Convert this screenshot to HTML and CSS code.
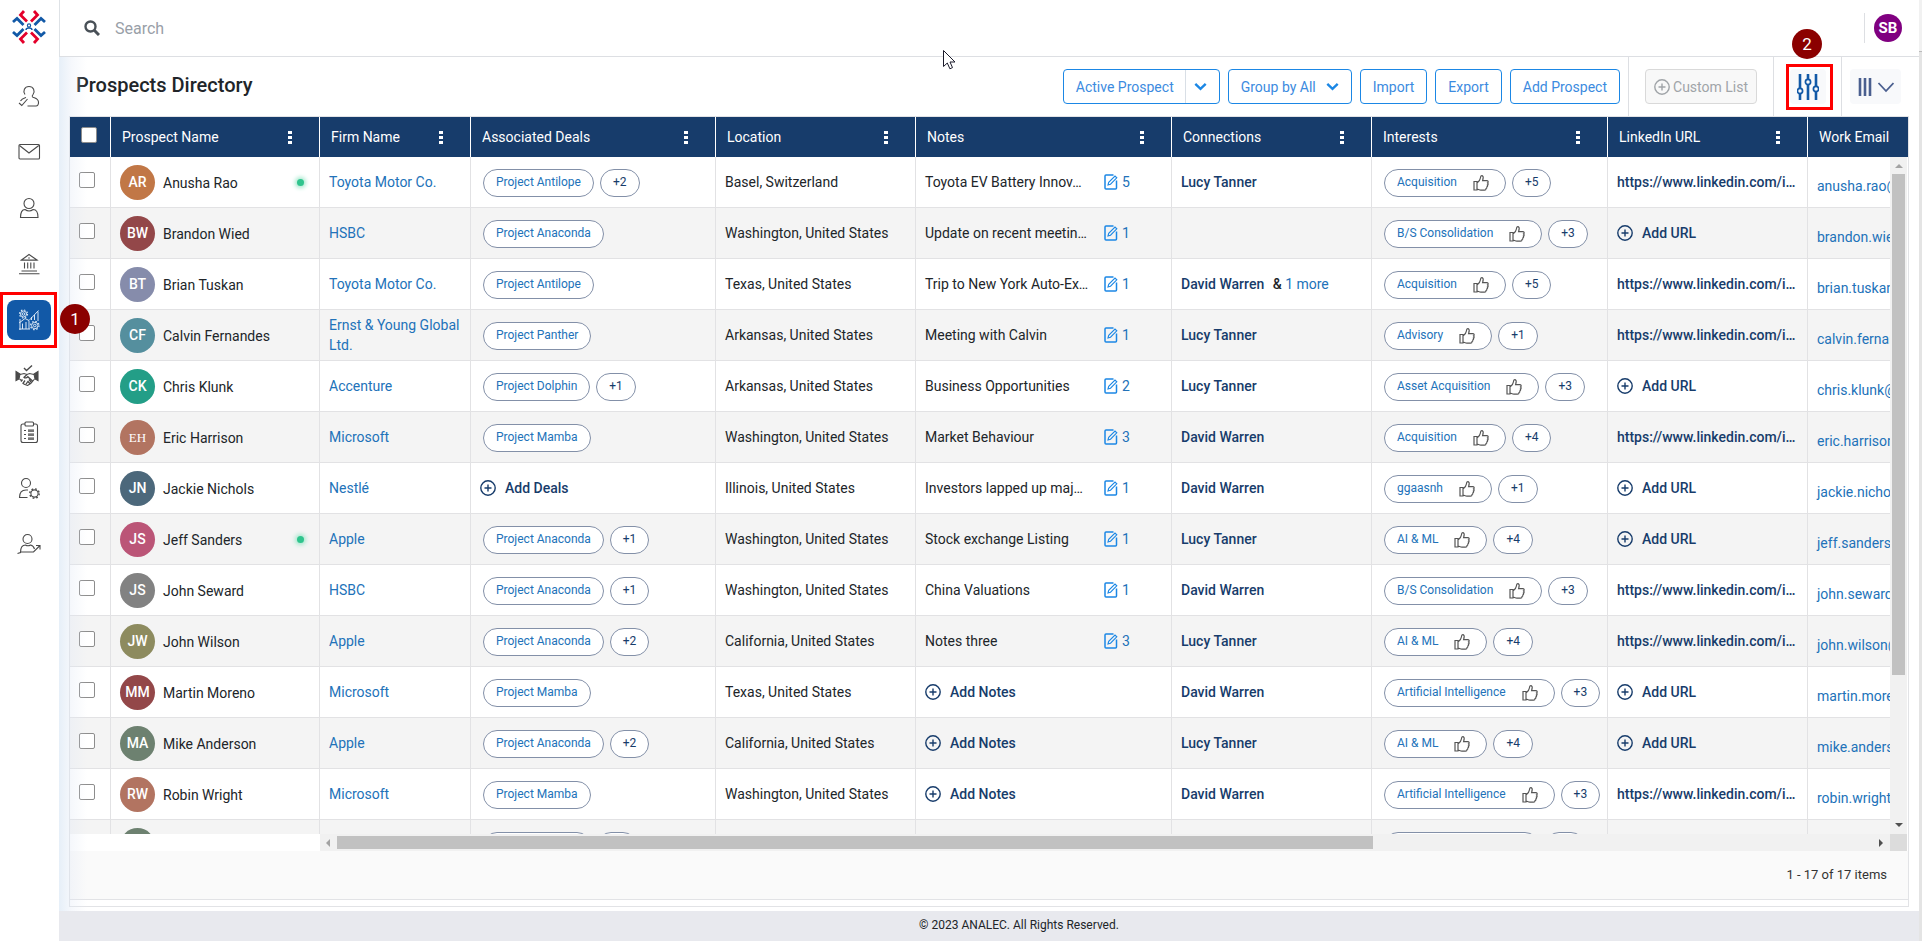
FILE: index.html
```html
<!DOCTYPE html>
<html lang="en">
<head>
<meta charset="utf-8">
<title>Prospects Directory</title>
<link rel="stylesheet" href="styles.css">
</head>
<body>
<svg class="sprite" aria-hidden="true">
  <symbol id="i-dots" viewBox="0 0 4 14"><path d="M0 1h4v3H0zM0 6h4v3H0zM0 11h4v3H0z" fill="currentColor"/></symbol>
  <symbol id="i-add" viewBox="0 0 16 16"><circle cx="8" cy="8" r="7.2"/><path d="M8 4.500v7M4.500 8h7"/></symbol>
  <symbol id="i-note" viewBox="0 0 14 16"><path d="M9.500 1H2Q1 1 1 2v12Q1 15 2 15h9.500Q12.500 15 12.500 14V6.500"/><path d="M4 11l.7-2.600L11 2l1.800 1.800-6.300 6.400z" stroke-width="1.100"/></symbol>
  <symbol id="i-thumb" viewBox="0 0 16 16"><path d="M1 6.500h3V15H1zM4 8C6 6.500 7.200 5 7.400 3 7.500 1.500 7.900.7 8.700.7c1.300 0 1.700 1.300 1.400 2.800L9.600 5.700H14c1.400.2 1.500 1.600.6 2.200.8.600.6 1.800-.2 2.200.4.700.2 1.500-.6 1.900.2.800-.1 1.500-.8 1.700 0 .8-.5 1.500-1.500 1.500H8c-1.600 0-2.500-.8-4-1.200z"/></symbol>
  <symbol id="i-chev" viewBox="0 0 12 8"><path d="M1.200 1.500L6 6.200l4.800-4.700" stroke-width="2.200"/></symbol>
</svg>

<div class="app">
  <nav class="sidebar" aria-label="Main">
    <a class="logo" href="#" aria-label="Home">
      <svg viewBox="0 0 34 34" width="34" height="34" fill="none" stroke-width="2.800">
        <g stroke="#e4002b"><path d="M15 11.500L8.500 5l3.500-4M19 11.500L25.500 5 22 1M15 22.500L8.500 29l3.500 4M19 22.500l6.500 6.500-3.500 4"/></g>
        <g stroke="#1259a7"><path d="M11.500 15L5 8.500 1 12M22.500 15L29 8.500l4 3.500M11.500 19L5 25.500 1 22M22.500 19l6.500 6.500 4-3.500"/><circle cx="17" cy="15.500" r="1.600" stroke-width="1.200"/><path d="M14 20q0-2 3-2t3 2" stroke-width="1.400"/></g>
      </svg>
    </a>
    <ul class="nav">
      <li><a href="#" aria-label="Client access"><svg viewBox="0 0 22 22"><path d="M7 9.500C4.500 6 6.500 1.500 11 1.500s6.500 4.500 4 8c-.8 1-1 1.500-.6 2.200 1 1.500 5.600 1 6.100 5.300.2 2.500-1 4-2.500 4H9.500M8 12.500c-2 .7-4.500 1.500-5.500 3.500M1 18l2.800 2.500L9.500 14"/></svg></a></li>
      <li><a href="#" aria-label="Mail"><svg viewBox="0 0 22 22"><rect x="1" y="3.500" width="20.500" height="14.500" rx="1"/><path d="M1.500 4.500L11 12l9.800-7.500"/></svg></a></li>
      <li><a href="#" aria-label="Contacts"><svg viewBox="0 0 22 22"><circle cx="11" cy="6.500" r="5"/><path d="M7 12.500c-3 0-4.500 3-4.500 8h17.500c0-5-1.500-8-4.800-8Q11 15.500 7 12.500z"/></svg></a></li>
      <li><a href="#" aria-label="Firms"><svg viewBox="0 0 22 22"><path d="M3.500 7L11 1.500 19 7zM2.500 7.200h17M6.500 9.500v6M9.700 9.500v6M12.800 9.500v6M16 9.500v6M3.500 18h15.500M1 20.700h20.500M10.200 5h1.600"/></svg></a></li>
      <li class="current"><a href="#" aria-label="Prospects" aria-current="page"><svg viewBox="0 0 22 22"><path d="M2 10v11M1 20h11M4.500 20v-5.500M8 20v-7M11 20v-8M13.500 11V8M16.500 11V6M20 12V2.500M1 14l6-4.500 4 2L20.500 1.500"/><circle cx="5.500" cy="5" r="1.300"/><circle cx="5.500" cy="5" r="3"/><circle cx="5.500" cy="5" r="4" stroke-width="1.200" stroke-dasharray="1.500 1.640"/><circle cx="16.800" cy="16.500" r="1.300"/><circle cx="16.800" cy="16.500" r="3.200"/><circle cx="16.800" cy="16.500" r="4.200" stroke-width="1.200" stroke-dasharray="1.600 1.700"/></svg></a>
        <span class="frame frame-nav"></span><span class="step step-nav">1</span></li>
      <li><a href="#" aria-label="Deals"><svg class="wide" viewBox="2 0 24 22"><path d="M9 3l2.500 2.500L17 .5" stroke-width="1.400"/><path d="M1 6.500l4 2.500-1 5-3 1.500zM23 6.500L19 9l1 5 3 1.500z" fill="#4a4a4a"/><path d="M5 9.500l4-1 3 1 2.500-1 4.500 1M4.500 14l2 1.500M19.500 14l-2 2.500c-1 2-3 3-5 4-1.500-.5-3.500-1-5-2.500"/><path d="M12 9.500l-3 2.800c.8 1 2.500.7 3.800-.6l5 4.500M7.500 14.500L6 16.500M10 15.500l-1.800 2.500M12.500 17l-1.500 2.200M14 14.500l2.500 3M12.500 16l2.500 2.800" stroke-width="1.300"/></svg></a></li>
      <li><a href="#" aria-label="Tasks"><svg viewBox="0 0 22 22"><rect x="3" y="3" width="16.500" height="18.500" rx="2"/><rect x="7" y="1" width="8.500" height="4" rx="1" fill="#fff"/><path d="M6 9.500h2M10 9h6M10 10.200h6M6 13.500h2M10 13h6M10 14.200h6M6 17.500h2M10 17h6M10 18.200h6"/></svg></a></li>
      <li><a href="#" aria-label="User settings"><svg class="wide" viewBox="0 0 24 22"><circle cx="9" cy="6" r="4.500"/><path d="M10.500 20.500H2.500c0-5 2-7.500 6.500-7.500h2"/><circle cx="17.500" cy="16.500" r="3.600"/><circle cx="17.500" cy="16.500" r="4.700" stroke-width="1.400" stroke-dasharray="1.800 1.890"/></svg></a></li>
      <li><a href="#" aria-label="User activity"><svg class="wide" viewBox="0 0 24 22"><circle cx="10.500" cy="6" r="4.500"/><path d="M.5 20.500l3-1C3.500 14.500 5.500 12 8.500 12q2.500 1.500 5 0c2 .5 3.500 2.200 4 4M3.500 19h13l6.500-6.500M19 12.500h4v4"/></svg></a></li>
    </ul>
  </nav>

  <div class="page">
    <header class="topbar">
      <label class="search"><svg viewBox="0 0 16 16" width="16" height="16"><circle cx="6.500" cy="6.500" r="5" fill="none" stroke="#495057" stroke-width="2.400"/><path d="M10.500 10.500l4.500 4.500" stroke="#495057" stroke-width="3"/></svg>
        <input type="search" placeholder="Search" aria-label="Search"></label>
      <svg class="pointer" viewBox="0 0 13 20" width="13" height="20"><path d="M.5.500v16l3.800-3.500 2.600 5.800 2.600-1.200L7 12h5z" fill="#fff" stroke="#1b1b2b"/></svg>
      <div class="account"><button class="me" type="button">SB</button></div>
    </header>

    <main class="content">
      <div class="toolbar">
        <h1>Prospects Directory</h1>
        <div class="actions">
          <div class="split"><button type="button">Active Prospect</button><button type="button" class="caret" aria-label="Prospect status"><svg class="chev"><use href="#i-chev"/></svg></button></div>
          <button type="button" class="btn">Group by All <svg class="chev"><use href="#i-chev"/></svg></button>
          <button type="button" class="btn">Import</button>
          <button type="button" class="btn">Export</button>
          <button type="button" class="btn">Add Prospect</button>
        </div>
        <div class="zone"><button type="button" class="btn custom" disabled><svg class="add"><use href="#i-add"/></svg>Custom List</button></div>
        <div class="zone zone-filter"><button type="button" class="soft filter" aria-label="Filters"><svg viewBox="0 0 22 26" width="22" height="26" fill="none" stroke="#1259a7"><path d="M3 0v14M3 20v6M11 0v5.500M11 11v15M19 0v12M19 18v8" stroke-width="2.600"/><g stroke-width="1.700"><circle cx="3" cy="17" r="2.600"/><circle cx="11" cy="8" r="2.600"/><circle cx="19" cy="15" r="2.600"/></g></svg></button>
          <span class="frame frame-filter"></span><span class="step step-filter">2</span></div>
        <div class="zone zone-cols"><button type="button" class="soft cols" aria-label="Columns"><svg viewBox="0 0 36 18" width="36" height="18" fill="none" stroke="#4a5f8f"><path d="M2 0v18M7 0v18M12 0v18" stroke-width="2.600"/><path d="M20.500 5l7.500 8 7.500-8" stroke-width="1.800"/></svg></button></div>
      </div>

      <section class="card">
        <div class="grid">
          <div class="viewport">
            <table>
              <colgroup><col class="c-check"><col class="c-name"><col class="c-firm"><col class="c-deals"><col class="c-loc"><col class="c-notes"><col class="c-conn"><col class="c-int"><col class="c-url"><col class="c-mail"></colgroup>
              <thead><tr id="head"></tr></thead>
              <tbody id="rows"></tbody>
            </table>
          </div>
          <div class="gutter"><div class="gutter-head"></div><div class="vbar"><i class="up"></i><div class="vthumb"></div><i class="down"></i></div></div>
        </div>
        <div class="hbar"><div class="locked"></div><div class="htrack"><i class="left"></i><div class="hthumb"></div><i class="right"></i></div><div class="corner"></div></div>
        <div class="pager">1 - 17 of 17 items</div>
      </section>
    </main>
    <footer class="foot">© 2023 ANALEC. All Rights Reserved.</footer>
  </div>
  <div class="rail"></div>
</div>
<script src="rows.js"></script>
</body>
</html>
```

FILE: styles.css
```css
* { box-sizing: border-box; }
body { margin: 0; font: 14px/20px Roboto, "Liberation Sans", sans-serif; color: #212529; background: #fff; }
button { font: inherit; cursor: pointer; }
a { color: #2272b9; text-decoration: none; }
svg { display: block; flex: none; }
.sprite { position: absolute; width: 0; height: 0; }

.app { display: flex; height: 100vh; overflow: hidden; }
.sidebar { width: 59px; flex: none; background: #fff; padding-right: 1px; }
.logo { display: flex; justify-content: center; padding: 10px 0 24px; }
.nav { list-style: none; margin: 0; padding: 0; }
.nav li { position: relative; height: 56px; display: flex; align-items: center; justify-content: center; }
.nav svg { width: 22px; height: 22px; fill: none; stroke: #4a4a4a; stroke-width: 1.1; overflow: visible; }
.nav svg.wide { width: 24px; }
.nav a { display: flex; align-items: center; justify-content: center; width: 44px; height: 40px; border-radius: 8px; }
.nav .current a { background: #1259a7; }
.nav .current svg { stroke: #d8e6f5; stroke-width: 1; }

.frame { position: absolute; border: 3px solid #f00; pointer-events: none; }
.frame-nav { inset: 0 1px 0 0; }
.frame-filter { inset: 7px 8px 6px 12px; }
.step { position: absolute; z-index: 5; width: 30px; height: 30px; border-radius: 50%; background: #8b0000; color: #fff; font-size: 17px; line-height: 30px; text-align: center; }
.step-nav { left: 60px; top: 12px; }
.step-filter { left: 18px; top: -28px; }

.page { flex: 1; min-width: 0; display: flex; flex-direction: column; }
.topbar { position: relative; height: 57px; flex: none; display: flex; align-items: center; justify-content: space-between; padding: 0 17px 0 24px; border-left: 1px solid #dee2e6; border-bottom: 1px solid #dddfe3; background: #fff; }
.search { display: flex; align-items: center; gap: 12px; flex: 1; }
.search input { border: 0; outline: 0; width: 400px; font: 16px/24px Roboto, "Liberation Sans", sans-serif; padding: 1px 3px 0; }
.search input::placeholder { color: #99a0a8; opacity: 1; }
.pointer { position: absolute; left: 883px; top: 50px; z-index: 4; }
.account { border-left: 1px solid #dddfe3; padding: 1px 0 1px 9px; }
.me { width: 28px; height: 28px; border: 0; padding: 0; border-radius: 50%; background: #800080; color: #fff; font-weight: 700; font-size: 15px; }

.content { position: relative; flex: 1; min-height: 0; display: flex; flex-direction: column; padding: 0 10px 4px; }
.content::before { content: ""; position: absolute; inset: 0 auto 0 0; width: 28px; z-index: 2; pointer-events: none; background: linear-gradient(90deg, rgba(200,220,240,.45), rgba(225,232,245,.3) 45%, rgba(255,255,255,0)); }
.toolbar { flex: none; display: flex; align-items: stretch; height: 59px; }
h1 { margin: 0; padding: 16px 7px; flex: 1; font-size: 20px; line-height: 24px; font-weight: 500; white-space: nowrap; }
.actions { display: flex; gap: 8px; padding: 12px 8px 12px 0; }
.btn, .split { height: 35px; border: 1px solid #1b87e5; border-radius: 4px; background: #fff; color: #3c8be0; display: flex; align-items: center; white-space: nowrap; }
.btn { padding: 0 12px; gap: 10px; }
.split button { height: 33px; border: 0; background: none; color: inherit; padding: 0 11px 0 12px; }
.split .caret { border-left: 1px solid #d9dfe6; padding: 0 12px 0 8px; }
.chev { width: 13px; height: 9px; fill: none; stroke: #1b87e5; }
.zone { position: relative; border-left: 1px solid #dddfe3; padding: 12px 16px; }
.zone-filter { padding: 12px 15px 12px 16px; }
.zone-cols { padding: 12px 8px; }
.btn.custom { border-color: #d9d9d9; background: #f8f8f8; color: #a0a4a8; padding: 0 8px; gap: 3px; }
.add { width: 16px; height: 16px; fill: none; stroke: currentColor; stroke-width: 1.4; }
.soft { border: 0; border-radius: 4px; background: #f8f9fb; height: 35px; display: flex; align-items: center; justify-content: center; padding: 0; }
.filter { width: 36px; }
.cols { width: 51px; }

.card { flex: 1; min-height: 0; display: flex; flex-direction: column; border: 1px solid #e2e3e6; padding-bottom: 6px; }
.grid { flex: 1; min-height: 0; display: flex; overflow: hidden; }
.viewport { flex: 1; min-width: 0; overflow: hidden; }
.gutter { width: 18px; flex: none; display: flex; flex-direction: column; }
.gutter-head { position: relative; z-index: 3; height: 40px; flex: none; background: #173c6b; }
table { table-layout: fixed; width: 100%; min-width: 1938px; border-collapse: separate; border-spacing: 0; }
.c-check { width: 41px; } .c-name { width: 209px; } .c-firm { width: 151px; } .c-deals { width: 245px; } .c-loc { width: 200px; }
.c-notes { width: 256px; } .c-conn { width: 200px; } .c-int { width: 236px; } .c-url { width: 200px; } .c-mail { width: 200px; }
thead { position: relative; z-index: 3; }
th { height: 40px; padding: 0 11px; background: #173c6b; color: #fff; font-weight: 400; text-align: left; border-right: 1px solid #fff; }
th > div { display: flex; align-items: center; justify-content: space-between; padding-right: 16px; }
.more { border: 0; background: none; color: #fff; padding: 0; }
.more svg { width: 4px; height: 14px; }
th input, td input { display: block; appearance: none; width: 16px; height: 16px; margin: 0 0 4px; border: 1px solid #8d8d8d; border-radius: 2px; background: #fff; }
td { height: 51px; padding: 0 9px; border-right: 1px solid #e2e2e4; border-bottom: 1px solid #e2e2e4; white-space: nowrap; }
tr:nth-child(even) td { background: #f4f4f4; }
.person { display: flex; align-items: center; gap: 8px; padding-top: 1px; }
.person i { width: 35px; height: 35px; border-radius: 50%; color: #fff; font-style: normal; font-weight: 500; line-height: 35px; text-align: center; }
.person i.serif { font: 13px/35px "Liberation Serif", serif; }
.person b { font-weight: 400; flex: 1; }
.person u { width: 7px; height: 7px; margin-right: 6px; border-radius: 50%; background: #2fc48d; box-shadow: 0 0 4px 2px #a4e8cd; }
.firm { white-space: normal; line-height: 20px; }
.pills { display: flex; gap: 6px; padding: 1px 0 0 3px; }
.pill { height: 28px; border: 1px solid #8390a8; border-radius: 14px; padding: 0 12px 2px; background: #fff; color: #2272b9; font-size: 12px; display: flex; align-items: center; }
.pill.n { color: #173c6b; }
.pill svg { width: 16px; height: 16px; margin: 2px 4px 0 16px; fill: none; stroke: #555; stroke-width: 1.2; }
.addlink { border: 0; background: none; padding: 0; display: flex; align-items: center; gap: 9px; color: #173c6b; font-weight: 500; }
.note { display: flex; align-items: center; }
.note span { width: 165px; margin-right: 14px; }
.note a { display: flex; align-items: center; gap: 4px; }
.note svg { width: 14px; height: 16px; fill: none; stroke: #1b87e5; stroke-width: 1.5; }
.conn { color: #173c6b; font-weight: 500; }
.conn a { font-weight: 400; }
.conn em { font-style: normal; padding-left: 5px; color: #212529; }
.url { color: #173c6b; font-weight: 500; display: block; }
.mail { padding-top: 8px; }

.vbar { flex: 1; display: flex; flex-direction: column; align-items: center; width: 17px; background: #f1f1f1; }
.vbar i, .htrack i { width: 0; height: 0; border: 4px solid transparent; }
.vbar .up { border-bottom-color: #a3a3a3; margin: 3px 0 6px; }
.vbar .down { border-top-color: #505050; margin: auto 0 3px; }
.vthumb { width: 13px; height: 74%; background: #c1c1c1; }
.hbar { flex: none; display: flex; height: 17px; padding-right: 1px; }
.locked { width: 250px; }
.htrack { flex: 1; display: flex; align-items: center; background: #f1f1f1; }
.htrack .left { border-right-color: #a3a3a3; margin: 0 7px 0 2px; }
.htrack .right { border-left-color: #505050; margin: 0 3px 0 auto; }
.hthumb { width: 66%; height: 13px; background: #c1c1c1; }
.corner { width: 17px; background: #dcdcdc; }
.pager { flex: none; height: 49px; padding: 0 21px; font-size: 13px; line-height: 48px; text-align: right; background: #fafafa; border-bottom: 1px solid #e2e3e6; color: #333; }
.foot { flex: none; height: 30px; padding-left: 60px; line-height: 28px; text-align: center; font-size: 12px; background: #e8e9ee; }
.rail { width: 3px; flex: none; background: linear-gradient(#f1f1f1 51px, #bbb 51px, #bbb 52px, #e4e4e4 52px); }
```

FILE: rows.js
```js
const columns = ["Prospect Name", "Firm Name", "Associated Deals", "Location", "Notes", "Connections", "Interests", "LinkedIn URL", "Work Email"];

// name, initials, avatar colour, online, firm, deal, more deals, location, note, note count, connection, more connections, interest, more interests, has URL, email
const people = [
  ["Anusha Rao", "AR", "#c17746", 1, "Toyota Motor Co.", "Project Antilope", 2, "Basel, Switzerland", "Toyota EV Battery Innov…", 5, "Lucy Tanner", 0, "Acquisition", 5, 1, "anusha.rao@toyota.com"],
  ["Brandon Wied", "BW", "#934749", 0, "HSBC", "Project Anaconda", 0, "Washington, United States", "Update on recent meetin…", 1, "", 0, "B/S Consolidation", 3, 0, "brandon.wied@hsbc.com"],
  ["Brian Tuskan", "BT", "#868cab", 0, "Toyota Motor Co.", "Project Antilope", 0, "Texas, United States", "Trip to New York Auto-Ex…", 1, "David Warren", 1, "Acquisition", 5, 1, "brian.tuskan@toyota.com"],
  ["Calvin Fernandes", "CF", "#558f9e", 0, "Ernst & Young Global Ltd.", "Project Panther", 0, "Arkansas, United States", "Meeting with Calvin", 1, "Lucy Tanner", 0, "Advisory", 1, 1, "calvin.fernandes@ey.com"],
  ["Chris Klunk", "CK", "#239e87", 0, "Accenture", "Project Dolphin", 1, "Arkansas, United States", "Business Opportunities", 2, "Lucy Tanner", 0, "Asset Acquisition", 3, 0, "chris.klunk@accenture.com"],
  ["Eric Harrison", "EH", "#b27461", 0, "Microsoft", "Project Mamba", 0, "Washington, United States", "Market Behaviour", 3, "David Warren", 0, "Acquisition", 4, 1, "eric.harrison@microsoft.com"],
  ["Jackie Nichols", "JN", "#4c687b", 0, "Nestlé", "", 0, "Illinois, United States", "Investors lapped up maj…", 1, "David Warren", 0, "ggaasnh", 1, 0, "jackie.nichols@nestle.com"],
  ["Jeff Sanders", "JS", "#bb5577", 1, "Apple", "Project Anaconda", 1, "Washington, United States", "Stock exchange Listing", 1, "Lucy Tanner", 0, "AI & ML", 4, 0, "jeff.sanders@apple.com"],
  ["John Seward", "JS", "#828282", 0, "HSBC", "Project Anaconda", 1, "Washington, United States", "China Valuations", 1, "David Warren", 0, "B/S Consolidation", 3, 1, "john.seward@hsbc.com"],
  ["John Wilson", "JW", "#8d8b5f", 0, "Apple", "Project Anaconda", 2, "California, United States", "Notes three", 3, "Lucy Tanner", 0, "AI & ML", 4, 1, "john.wilson@apple.com"],
  ["Martin Moreno", "MM", "#934749", 0, "Microsoft", "Project Mamba", 0, "Texas, United States", "", 0, "David Warren", 0, "Artificial Intelligence", 3, 0, "martin.moreno@microsoft.com"],
  ["Mike Anderson", "MA", "#6d8170", 0, "Apple", "Project Anaconda", 2, "California, United States", "", 0, "Lucy Tanner", 0, "AI & ML", 4, 0, "mike.anderson@apple.com"],
  ["Robin Wright", "RW", "#b27461", 0, "Microsoft", "Project Mamba", 0, "Washington, United States", "", 0, "David Warren", 0, "Artificial Intelligence", 3, 1, "robin.wright@microsoft.com"],
  ["", "", "#6d8170", 0, "", "Project Panther", 1, "", " ", 0, "", 0, "Asset Acquisition", 3, 2, ""]
];

const esc = s => s.replace(/&/g, "&amp;");
const add = label => `<button type="button" class="addlink"><svg class="add"><use href="#i-add"/></svg>${label}</button>`;
const count = n => n ? `<span class="pill n">+${n}</span>` : "";

document.getElementById("head").innerHTML =
  '<th><input type="checkbox" aria-label="Select all"></th>' +
  columns.map(c => `<th scope="col"><div>${c}<button type="button" class="more" aria-label="${c} menu"><svg><use href="#i-dots"/></svg></button></div></th>`).join("");

document.getElementById("rows").innerHTML = people.map(([name, initials, color, online, firm, deal, deals, place, note, notes, conn, conns, interest, interests, url, mail]) => `<tr>
  <td><input type="checkbox" aria-label="Select ${name || "prospect"}"></td>
  <td><div class="person"><i class="${initials === "EH" ? "serif" : ""}" style="background:${color}">${initials}</i><b>${name}</b>${online ? "<u></u>" : ""}</div></td>
  <td class="firm"><a href="#">${esc(firm)}</a></td>
  <td>${deal ? `<div class="pills"><a href="#" class="pill">${deal}</a>${count(deals)}</div>` : add("Add Deals")}</td>
  <td>${place}</td>
  <td>${note ? `<div class="note"><span>${note}</span>${notes ? `<a href="#"><svg><use href="#i-note"/></svg>${notes}</a>` : ""}</div>` : add("Add Notes")}</td>
  <td class="conn">${conn}${conns ? ` <em>&amp;</em> <a href="#">${conns} more</a>` : ""}</td>
  <td><div class="pills"><a href="#" class="pill">${esc(interest)}<svg><use href="#i-thumb"/></svg></a>${count(interests)}</div></td>
  <td>${url === 2 ? "" : url ? '<a href="#" class="url">https://www.linkedin.com/i…</a>' : add("Add URL")}</td>
  <td class="mail"><a href="#">${mail}</a></td>
</tr>`).join("");
```
